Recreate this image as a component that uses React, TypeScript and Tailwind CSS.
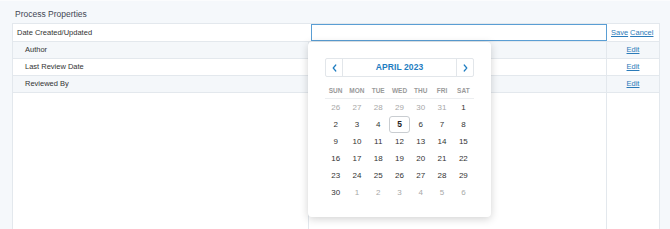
import React from "react";

const weekdays = ["SUN", "MON", "TUE", "WED", "THU", "FRI", "SAT"];

type Day = { n: number; muted?: boolean; selected?: boolean };

const buildDays = (): Day[] => {
  const days: Day[] = [];
  [26, 27, 28, 29, 30, 31].forEach((n) => days.push({ n, muted: true }));
  for (let i = 1; i <= 30; i++) days.push({ n: i, selected: i === 5 });
  [1, 2, 3, 4, 5, 6].forEach((n) => days.push({ n, muted: true }));
  return days;
};

const rows = [
  { label: "Author", alt: true },
  { label: "Last Review Date", alt: false },
  { label: "Reviewed By", alt: true },
];

const Chevron: React.FC<{ dir: "left" | "right" }> = ({ dir }) => (
  <svg width="5" height="8" viewBox="0 0 5 8" fill="none">
    <path
      d={dir === "left" ? "M3.8 1 1.2 4 3.8 7" : "M1.2 1 3.8 4 1.2 7"}
      stroke="#1f7dc1"
      strokeWidth="1.2"
      strokeLinecap="round"
      strokeLinejoin="round"
    />
  </svg>
);

const Calendar: React.FC = () => {
  const days = buildDays();
  return (
    <div className="absolute left-[295px] top-[18px] w-[183px] h-[175px] bg-white rounded-[4px] shadow-[0_2px_8px_rgba(0,0,0,0.18)] px-[17px] pt-[16px]">
      {/* month nav */}
      <div className="flex h-[19px] border border-[#e2e6ea] rounded-[2px]">
        <div className="w-[17px] flex items-center justify-center border-r border-[#e2e6ea]">
          <Chevron dir="left" />
        </div>
        <div className="flex-1 flex items-center justify-center text-[8.5px] font-bold text-[#1f7dc1] tracking-[0.1px]">
          APRIL 2023
        </div>
        <div className="w-[17px] flex items-center justify-center border-l border-[#e2e6ea]">
          <Chevron dir="right" />
        </div>
      </div>

      {/* weekday header */}
      <div className="grid grid-cols-7 mt-[6px] h-[16px] border-b border-[#eceef0] items-center">
        {weekdays.map((d) => (
          <div key={d} className="text-center text-[6.5px] font-bold text-[#9a9a9a]">
            {d}
          </div>
        ))}
      </div>

      {/* days */}
      <div className="grid grid-cols-7">
        {days.map((d, i) => (
          <div key={i} className="h-[17px] flex items-center justify-center">
            {d.selected ? (
              <div className="w-[22px] h-[17px] flex items-center justify-center border border-[#c9cdd1] rounded-[3px] text-[8.5px] font-bold text-[#222]">
                {d.n}
              </div>
            ) : (
              <span className={`text-[8px] ${d.muted ? "text-[#a8a8a8]" : "text-[#333]"}`}>{d.n}</span>
            )}
          </div>
        ))}
      </div>
    </div>
  );
};

const App: React.FC = () => {
  return (
    <div
      className="w-[670px] h-[229px] bg-[#f5f8fb] overflow-hidden flex flex-col border-t border-[#fbfcfd]"
      style={{ fontFamily: '"Liberation Sans", Arial, sans-serif' }}
    >
      <div className="pl-[15px] pt-[7px] h-[22px] text-[8.5px] leading-[12px] text-[#3f4653]">
        Process Properties
      </div>

      <div className="relative ml-[12px] w-[648px] flex-1 flex flex-col bg-white border-t border-l border-r border-[#e3e8ed]">
        {/* editing row */}
        <div className="flex h-[18px] border-b border-[#e3e8ed]">
          <div className="w-[295px] pl-[4px] flex items-center text-[7.5px] text-[#333]">
            Date Created/Updated
          </div>
          <div className="w-[299px] pl-[2px] border-l border-white">
            <div className="h-full w-full border border-[#5a9ed4]" />
          </div>
          <div className="flex-1 flex items-center pl-[4px] gap-[2px] text-[7.5px] text-[#2b7bb9]">
            <span className="underline">Save</span>
            <span className="underline">Cancel</span>
          </div>
        </div>

        {rows.map((r) => (
          <div
            key={r.label}
            className={`flex h-[17px] border-b border-[#e3e8ed] ${r.alt ? "bg-[#f4f7fa]" : "bg-white"}`}
          >
            <div className="w-[295px] pl-[12px] flex items-center text-[7.5px] text-[#333]">{r.label}</div>
            <div className="w-[298px] border-l border-[#e3e8ed]" />
            <div className="flex-1 border-l border-[#e3e8ed] flex items-center justify-center text-[7.5px] text-[#2b7bb9]">
              <span className="underline">Edit</span>
            </div>
          </div>
        ))}

        {/* empty body */}
        <div className="flex flex-1">
          <div className="w-[295px]" />
          <div className="w-[298px] border-l border-[#e3e8ed]" />
          <div className="flex-1 border-l border-[#e3e8ed]" />
        </div>

        <Calendar />
      </div>
    </div>
  );
};

export default App;
